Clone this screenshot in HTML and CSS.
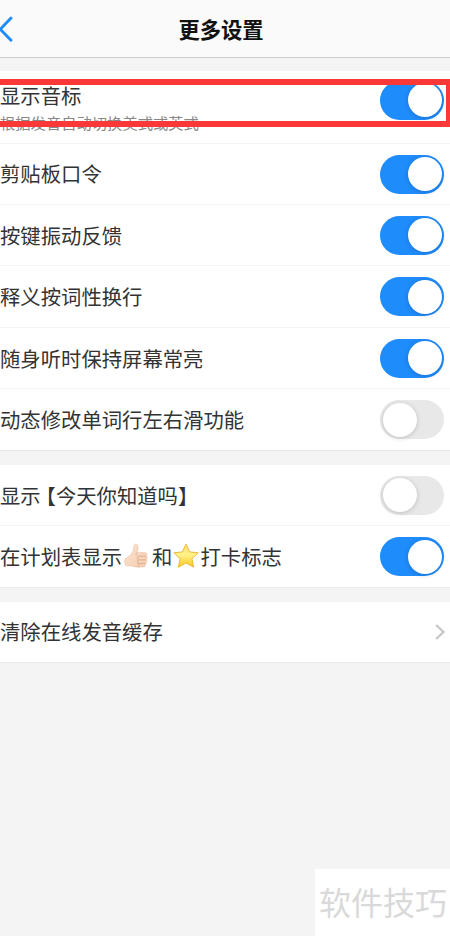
FILE: index.html
```html
<!DOCTYPE html>
<html lang="zh-CN">
<head>
<meta charset="utf-8">
<title>更多设置</title>
<link rel="stylesheet" href="styles.css">
</head>
<body>
<div class="screen">
  <header class="navbar">
    <svg class="back" viewBox="0 0 14 28" width="14" height="28"><path d="M11 3 L0.3 14.2 L11 25.2" fill="none" stroke="#1f8cfa" stroke-width="2.9" stroke-linecap="round"/></svg>
    <h1 class="title">更多设置</h1>
  </header>
  <main class="groups">
    <section class="group">
      <div class="row row-first">
        <div class="stack"><span class="label">显示音标</span><span class="sub">根据发音自动切换美式或英式</span></div>
        <span class="switch on"></span>
      </div>
      <div class="row"><span class="label">剪贴板口令</span><span class="switch on"></span></div>
      <div class="row"><span class="label">按键振动反馈</span><span class="switch on"></span></div>
      <div class="row"><span class="label">释义按词性换行</span><span class="switch on"></span></div>
      <div class="row"><span class="label">随身听时保持屏幕常亮</span><span class="switch on"></span></div>
      <div class="row"><span class="label">动态修改单词行左右滑功能</span><span class="switch"></span></div>
    </section>
    <section class="group">
      <div class="row"><span class="label">显示<span class="bracket">【</span>今天你知道吗】</span><span class="switch"></span></div>
      <div class="row">
        <span class="label with-icons"><span>在计划表显示</span><svg class="thumb" viewBox="0 0 30 28" width="30" height="28">
            <defs><linearGradient id="skin" x1="0" y1="0" x2="1" y2="1"><stop offset="0" stop-color="#fce3d0"/><stop offset="1" stop-color="#f3ccb0"/></linearGradient></defs>
            <path d="M3.2 16.5 C6.5 15.5 9 12.5 10.8 9.5 C11.8 7.7 11.4 4.5 12.3 2.8 C13.3 1.3 15.6 2 16 4.2 C16.4 6.6 15.7 8.8 15.3 10.7 L22.5 10.4 C25 10.4 25.6 12.8 24.1 14 C25.7 14.8 25.6 17 24.1 17.8 C25.3 18.8 24.8 20.8 23.4 21.4 C24.3 22.9 23.4 24.9 21.3 25 C17 25.3 12.5 25.2 9.5 23.9 C7.3 24.1 5 24.2 3.7 23.6 C2.4 21.8 2.3 18.5 3.2 16.5 Z" fill="url(#skin)" stroke="#e8bd9f" stroke-width=".5"/>
            <path d="M15.3 10.7 C13.9 11.1 13.3 12 14.3 13.4 M16.5 14.2 H24 M16.5 17.9 H24 M16.7 21.5 H23.2 M16.3 14.3 C15.2 15.5 15.2 17 16.2 17.9 C15.2 19 15.4 20.7 16.5 21.5 C16 22.7 16.2 23.7 17 24.8" fill="none" stroke="#d5a081" stroke-width=".7" stroke-linecap="round"/>
          </svg><span>和</span><svg class="star" viewBox="0 0 28 28" width="28" height="28">
            <defs><linearGradient id="gold" x1="0" y1="0" x2="0" y2="1"><stop offset="0" stop-color="#ffdc6a"/><stop offset=".45" stop-color="#fff28a"/><stop offset="1" stop-color="#fbc81c"/></linearGradient></defs>
            <path d="M14 2.2 L17.6 9.9 L26.2 10.8 L19.9 16.7 L21.7 25.2 L14 21 L6.3 25.2 L8.1 16.7 L1.8 10.8 L10.4 9.9 Z" fill="url(#gold)" stroke="#f0b83c" stroke-width="1" stroke-linejoin="round"/>
          </svg><span>打卡标志</span></span>
        <span class="switch on"></span>
      </div>
    </section>
    <section class="group">
      <div class="row row-link"><span class="label">清除在线发音缓存</span>
        <svg class="chevron" viewBox="0 0 12 18" width="12" height="18"><path d="M2.2 2 L9.4 9 L2.2 16" fill="none" stroke="#c7c7c9" stroke-width="2.4"/></svg>
      </div>
    </section>
  </main>
  <div class="highlight"></div>
  <div class="watermark">软件技巧</div>
</div>
</body>
</html>
```
FILE: styles.css
```css
* { box-sizing: border-box; }
body {
  margin: 0;
  background: #f4f4f4;
  font-family: "Noto Sans CJK SC", sans-serif;
  color: #333;
}
.screen {
  position: relative;
  width: 450px;
  height: 936px;
  overflow: hidden;
}
.navbar {
  position: relative;
  display: flex;
  align-items: center;
  justify-content: center;
  height: 58px;
  padding-right: 8px;
  background: #fafafa;
  border-bottom: 1px solid #cacccb;
}
.back { position: absolute; left: 0; top: 15px; }
.title {
  margin: 0;
  font-size: 21.3px;
  line-height: 30px;
  font-weight: 700;
  color: #111;
}
.groups {
  display: flex;
  flex-direction: column;
  gap: 14px;
  padding-top: 13px;
}
.group { background: #fff; }
.row {
  display: flex;
  align-items: center;
  justify-content: space-between;
  height: 61.45px;
  padding-right: 5.6px;
  border-bottom: 1px solid #f3f3f3;
}
.row:last-child { border-bottom-color: #e9e9e9; }
.row-first {
  height: 72.5px;
  align-items: flex-start;
  padding-top: 9px;
}
.row-link { padding-right: 4px; }
.stack { display: flex; flex-direction: column; }
.label {
  font-size: 20.35px;
  line-height: 30px;
  margin-bottom: 0.6px;
  white-space: nowrap;
}
.sub {
  font-size: 15.3px;
  line-height: 22px;
  color: #888;
}
.bracket {
  margin-left: 5px;
  font-feature-settings: "halt";
}
.with-icons { display: flex; align-items: center; }
.switch {
  display: flex;
  width: 64px;
  height: 39px;
  margin-top: 0.6px;
  padding: 2.5px;
  border-radius: 20px;
  background: #e8e8e8;
}
.switch::after {
  content: "";
  width: 34px;
  height: 34px;
  border-radius: 50%;
  background: #fff;
  box-shadow: 0 1px 5px rgba(0, 0, 0, .18);
}
.switch.on {
  justify-content: flex-end;
  background: #1f8cfc;
}
.highlight {
  position: absolute;
  left: -10px;
  top: 79px;
  width: 462px;
  height: 48px;
  border: 6px solid #fa3838;
}
.watermark {
  position: absolute;
  right: 0;
  bottom: 0;
  width: 135px;
  height: 67px;
  padding-left: 4px;
  background: #fff;
  color: #d9d9d9;
  font-size: 32px;
  font-weight: 400;
  line-height: 64px;
  white-space: nowrap;
}
```
